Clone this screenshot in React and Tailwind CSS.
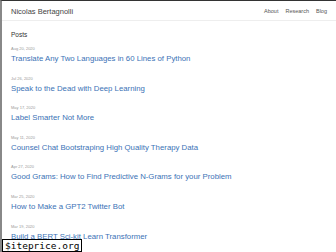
export default function App() {
  const posts = [
    ["Aug 20, 2020", "Translate Any Two Languages in 60 Lines of Python"],
    ["Jul 26, 2020", "Speak to the Dead with Deep Learning"],
    ["May 17, 2020", "Label Smarter Not More"],
    ["May 11, 2020", "Counsel Chat Bootstraping High Quality Therapy Data"],
    ["Apr 27, 2020", "Good Grams: How to Find Predictive N-Grams for your Problem"],
    ["Mar 25, 2020", "How to Make a GPT2 Twitter Bot"],
    ["Mar 19, 2020", "Build a BERT Sci-kit Learn Transformer"],
  ];
  return (
    <div className="relative w-[336px] h-[252px] overflow-hidden bg-white border-t border-t-[#333] border-l-2 border-l-[#888]" style={{ fontFamily: '"Liberation Sans", Arial, sans-serif' }}>
      <header className="h-[20px] flex items-center justify-between pl-[9px] pr-[9px] pt-[2px] bg-white border-b border-[#eeeeee]">
        <span className="text-[7.5px] text-[#444]">Nicolas Bertagnolli</span>
        <nav className="flex gap-[7px] text-[5.5px] text-[#555]">
          <span>About</span>
          <span>Research</span>
          <span>Blog</span>
        </nav>
      </header>
      <main className="pl-[9px] pt-[9px]">
        <h2 className="text-[6.5px] text-[#333] leading-[10px] mb-[6px]">Posts</h2>
        <ul className="flex flex-col">
          {posts.map(([d, t]) => (
            <li key={t} className="h-[29.6px]">
              <div className="text-[4px] text-[#999] leading-[6px]">{d}</div>
              <div className="text-[7.8px] text-[#3b72b6] leading-[10px] mt-[2px] whitespace-nowrap">{t}</div>
            </li>
          ))}
        </ul>
      </main>
      <div className="absolute left-0 bottom-0 h-[13px] px-[2px] bg-white border border-black text-[9.5px] leading-[11px] text-black" style={{ fontFamily: '"DejaVu Sans Mono", monospace' }}>
        $iteprice.org
      </div>
    </div>
  );
}
